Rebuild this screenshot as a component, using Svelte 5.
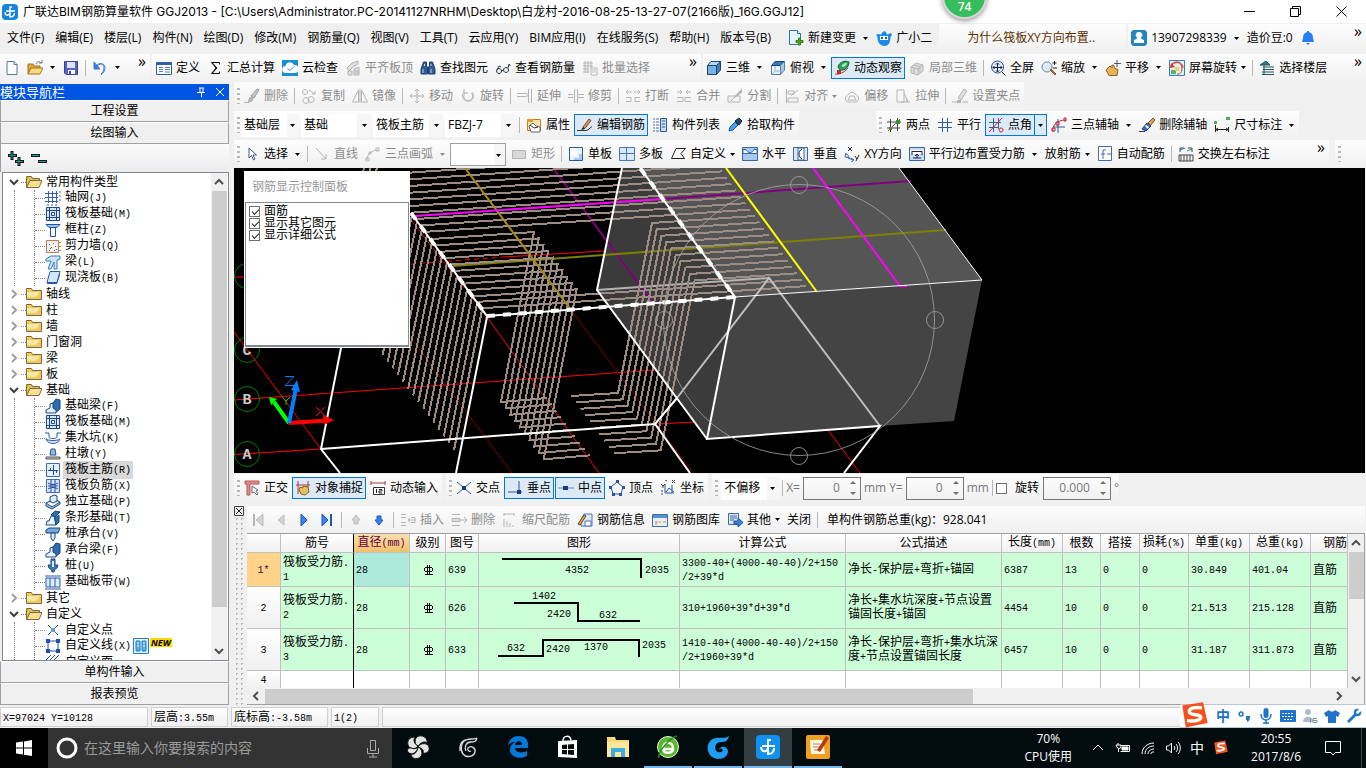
<script lang="ts">
  type Shape = [fill: string, stroke: string, d: string];
  type Tool = { icon?: string; label?: string; off?: boolean; active?: boolean; split?: boolean; menu?: boolean; sep?: boolean };
  type Node = { icon: string; label: string; selected?: boolean; fresh?: boolean };
  type Group = { label: string; open?: boolean; children?: Node[] };

  const G = "#b4b4b4";
  const B = "#2a5a9c";
  const N = "none";
  const K = "#222";

  const icons: Record<string, Shape[]> = {
    newfile: [["#fff", "#5b7599", "M3 1.5h7l3 3v10H3z"], ["#dfe8f4", "#5b7599", "M10 1.5v3h3"]],
    open: [["#e2a83c", "#9b7424", "M1 14V4h5l1 2h6v2"], ["#fbdc7c", "#9b7424", "M1 14l3-6h12l-3 6z"], [N, "#777", "M9 4c1-3 4-3 5-1M12 3h3V0"]],
    save: [["#5a63c4", "#3a3f98", "M1.500 1.500h13v13H3l-1.500-1.500z"], ["#dfe3fa", N, "M4 2h8v6H4z"], ["#fff", N, "M5 10h7v4H5z"], ["#3a3f98", N, "M6 11h2v3H6z"]],
    undo: [[N, "#3f78d8", "M4 6c3-4 9-3 9 2 0 3-2 5-4 7M5 6c3-3 7-2 7 2 0 3-2 5-3 6"], ["#3f78d8", "#3f78d8", "M2 2v7h6z"]],
    define: [["#fff", "#2e5fa8", "M.500 2.500h15v12H.500z"], ["#2e5fa8", N, "M0 2h16v3H0z"], [N, "#5d7fae", "M3 7.500h4M3 9.500h4M3 11.500h4M9 7.500h5M9 9.500h5M9 12h5"]],
    sum: [[N, "#111", "M12.500 4.500v-2H4.500L9 8l-4.500 5.500h8v-2M5.500 3L10 8l-4.500 5"]],
    cloud: [["#1b8fd6", N, "M0 0h16v16H0z"], ["#fff", N, "M4 13a3.500 3.500 0 0 1-.500-7A4.500 4.500 0 0 1 12 5a4 4 0 0 1 1 8z"], [N, "#1b8fd6", "M5.500 8.500l2.500 2 4-4"]],
    flush: [["#ddd", G, "M2 8l5-5 6-2v3L8 7l-4 4zM3 11h4v4H3zM9 9l5-2v8H9z"], [N, G, "M9 11h5M9 13h5"]],
    find: [["#315b95", "#1f3f70", "M3.500 2h3v4l1 1v7H1V9zM9.500 2h3L15 9v5H8.500V7l1-1z"], [N, "#b9d2f0", "M3 9v4M11 9v4M4.500 4v2M11 4v2"]],
    glasses: [["#e8eef8", "#333", "M4 8.500a2.500 2.500 0 1 0 .1 0zM11 7.500a2.500 2.500 0 1 0 .1 0z"], [N, "#333", "M6.500 11l2-1M2 10l2-4 2 1M13 8l1-4 1.500 2"]],
    batch: [[N, G, "M1 3h10M1 6h10M1 9h6M1 12h6M3 1v12M6 1v12M9 1v7"], ["#fff", G, "M9 8h6v7H9zM10 10h4M10 12h4"]],
    cube: [["#78b2e4", "#1c456e", "M1.500 5.500h9v9h-9z"], ["#b5d8f5", "#1c456e", "M1.500 5.500L5 1.500h9.500l-4 4z"], ["#3f7db8", "#1c456e", "M10.500 5.500l4-4V10l-4 4.500z"]],
    topview: [["#e8f2fc", "#5580b0", "M1.500 5.500h9v9h-9z"], ["#3a78b8", "#1c456e", "M1.500 5.500L5 1.500h9.500l-4 4z"], ["#a8cbec", "#5580b0", "M10.500 5.500l4-4V10l-4 4.500z"], [N, "#9ab8d8", "M5 6v5l-3 3M5 11h9"]],
    orbit: [["#28a35a", "#126a35", "M4 7c1-5 7-7 11-5 0 5-4 9-9 8z"], ["#b8ecc5", N, "M8 5c2-2 4-2 5-2-1 3-3 4-5 4z"], [N, "#c03030", "M1 14c4 1 10-2 13-6"], ["#c03030", N, "M3 10h4v4H3z"]],
    partial: [["#e0e0e0", G, "M2 7l5-4 7 2v6l-5 4-7-2z"], [N, G, "M2 7l7 2 5-4M9 9v6M5 5l6 2v6M5 8v6"]],
    full: [["#dcebfa", "#2d4f80", "M7.500 1a6 6 0 1 0 .1 0z"], [N, "#223", "M7.500 3v9M3 7.500h9M6 4.500L7.500 3 9 4.500M6 10.500L7.500 12 9 10.500M4.500 6L3 7.500 4.500 9M10.500 6L12 7.500 10.500 9"], [N, "#223", "M12 12l3.500 3.500"]],
    zoom: [["#dcebfa", "#667fa0", "M6 2a5 5 0 1 0 .1 0z"], ["#a86a38", "#8a5a30", "M9 10l5 5 1-1-5-5z"], [N, "#223", "M13.500 1v4M11.500 3h4M12 8h4"]],
    pan: [["#e8b458", "#8a6420", "M3 8l2-2 2 2V5l2 .500 1 3 3 1-1 6H4L1 10z"], [N, "#556", "M12 0v7M9 3.500h7"]],
    rotate: [["#dff0f8", "#3080c0", "M.500.500h15v15H.500z"], [N, "#e03020", "M3 5c3-4 10-3 10 3s-3 6-5 6M3 4c4-4 11-2 11 4"], ["#58b858", N, "M2 10h5v4H2z"], ["#e03020", N, "M1 8l5-1-4-4z"], ["#f0d060", N, "M6 7h4v4H6z"]],
    floor: [["#2e7d8c", "#1c5560", "M1 5l6-4 4 4z"], [N, "#1c5560", "M4 7h11M4 9.500h11M3 12h12M3 14.500h12M5 5v9"]],
    brush: [["#c8c8c8", "#999", "M7 8l6-7 2 1-5 8z"], [G, N, "M4 14c0-4 2-6 5-5 1 3-1 6-5 5z"], [N, G, "M0 14.500h5"]],
    copy: [[N, G, "M4 1.500a2.500 2.500 0 1 0 .1 0zM10 8.500a3 3 0 1 0 .1 0zM5 9.500a3 3 0 1 0 .1 0z"], [N, G, "M8 2l6 4M14 3v3h-3"]],
    mirror: [[N, G, "M6.500 2v12h-6zM9.500 2v12h6zM8 1v14"]],
    move: [[N, G, "M8 1v14M1 8h14M6 3l2-2 2 2M6 13l2 2 2-2M3 6L1 8l2 2M13 6l2 2-2 2"]],
    turn: [[N, G, "M4 4a5.500 5.500 0 1 0 8 0M4 1v4h4"], [N, G, "M5 5a4.500 4.500 0 1 0 6.500 0"]],
    extend: [[N, G, "M0 5.500h9M0 8.500h9M11.500 1v14M14.500 1v14M10 5v4"]],
    trim: [[N, G, "M0 6.500h5M0 9.500h5M10 6.500h6M10 9.500h6M6.500 1v14M9.500 1v14"]],
    break: [[N, G, "M1 9.500h5v4H1M15 9.500h-5v4h5M1 4h6M9 4h6M3 2L1 4l2 2M13 2l2 2-2 2"]],
    merge: [[N, G, "M1 9.500h6v4H1M15 9.500H9v4h6M1 4h5M10 4h5M4 2l2 2-2 2M12 2l-2 2 2 2"]],
    divide: [[N, G, "M1 8h12v6H1zM4 13L15 1"], [G, G, "M7 10l7-8 1 2z"]],
    align: [[N, G, "M2.500 1v14M4 3h6v3H4zM4 10h10v4H4zM14 2L7 8"]],
    offset: [[N, G, "M5 6a3.500 3.500 0 0 1 6 0c4 1 5 7 1 8H4c-4-1-3-7 1-8zM6 8h4l2 4H4z"]],
    stretch: [[N, G, "M2 2h7v12H2zM9 5l4 9M6 14h9M12 11v3"]],
    grippt: [[N, G, "M0 14h5M10 14h6"], ["#ddd", G, "M6 10l6-9 3 2-6 9z"], [G, N, "M5 12h4v3H5z"]],
    props: [["#f8e0a8", "#c08020", "M1.500 2.500h13v11h-13z"], ["#e8952c", N, "M1 2h6v3H1z"], ["#fff", "#666", "M3 9l4-3 3 3 4 1v5H5z"], [N, "#333", "M4 8l4 3 4-1"]],
    edit: [[N, "#333", "M0 13.500h10M10 13.500l5-4"], ["#d89858", "#73502c", "M6 10l6-8 2 1.500-6 8z"], ["#222", N, "M4 13l2-3 2 2z"]],
    list: [[N, "#5070a0", "M1 2h2M1 5h2M1 8h2M1 11h2M1 14h2M4 2h3M4 5h3M4 8h3M4 11h3M4 14h3"], ["#c8ddf4", B, "M8.500 1.500h6v13h-6z"], [N, B, "M10 4h3M10 7h3M10 10h3"]],
    pick: [["#4aa0e8", "#1d5c9c", "M2 14l1-4 5-5 3 3-5 5z"], ["#244a78", "#122", "M8 4l4-3 3 3-3 4z"]],
    two: [[N, "#445", "M4.500 2v13M11.500 1v13M1 5h14M1 11h13"], [N, "#d03030", "M2 14L14 2"], ["#3a9030", N, "M10 3h4v4h-4zM3 10h3v3H3z"]],
    parallel: [[N, "#335c98", "M5.500 1v14M10.500 1v14M1 5.500h14M1 10.500h14"]],
    angle: [[N, "#335c98", "M5.500 1v14M10.500 1v11M1 5.500h12M1 10.500h10"], [N, "#d02030", "M1 15L14 1M13 11a2 2 0 1 0 .1 0z"]],
    three: [[N, "#c02838", "M2 15C1 8 6 3 15 3"], [N, B, "M7 2v14M2 10h12"], [N, "#c02838", "M1 11h3v3H1zM5 5h3v3H5zM13 1h2v3h-2z"]],
    delaxis: [["#e0a050", "#7a5424", "M9 6l5-5 2 2-5 6z"], ["#4068c0", "#203878", "M3 12l5-6 4 3-5 5z"], ["#fff", N, "M6 9l3 3 1-2-3-2z"], [N, "#335", "M0 14.500h6"]],
    dim: [[N, K, "M1.500 8v7M14.500 10v5M2 12.500h12M4 11l-2 1.500L4 14M12 11l2 1.500L12 14"], ["#50b050", N, "M0 4h3v3H0zM12 0h4v3h-4z"]],
    select: [["#fff", "#445a80", "M5 2v10l2.500-2.500L9.500 14l1.500-1-2-4h3.500z"]],
    line: [[N, G, "M2 2l10 11M12 8v5H7"]],
    arc: [[N, G, "M2 14C2 8 7 4 13 4M11 2h3v3h-3zM1 12h3v3H1zM4 6h2v2H4z"]],
    rect: [["#d8d8d8", G, "M1.500 4.500h13v8h-13z"]],
    single: [["#e8f1fc", B, "M1.500 1.500h13v13h-13z"], ["#fff", N, "M2 2h7v8H2z"], ["#a8c8f0", N, "M11 8h3v6H6v-2h5z"]],
    multi: [["#d9e8fa", "#4478b8", "M.500 1.500h15v13H.500z"], [N, "#4478b8", "M7.500 2v12M1 7.500h14"]],
    custom: [[N, K, "M6 2.500h9.500L11 7.500l3.500 5H1.500z"]],
    horiz: [["#a8c8f0", "#3468a8", "M.500 1.500h15v13H.500z"], ["#fff", "#3468a8", "M1 3.500h3c1 4 7 4 8 0h3v4H1z"]],
    vert: [["#d8e6f8", "#3468a8", "M.500 1.500h14v13h-14z"], ["#fff", "#3468a8", "M5 2h6v12H5z"], [N, "#223", "M9 3c-4 2-4 8 0 10"]],
    xy: [[N, "#223", "M4 1l4 4M8 1L4 5M11 10l2 3M15 9l-3 6"], [N, "#3468a8", "M1 9c2-2 4 0 3 3l5 2M2 7l-1 4 5 1M7 12l3 2-3 2"]],
    edge: [["#c8dcf4", "#3468a8", "M.500 1.500h15v13H.500z"], ["#fff", N, "M1 4h14v4H1z"], [N, "#223", "M3 5.500h10M3 5v4M13 5v4M4 12h8M8 8v4M6 10l2-2 2 2"]],
    auto: [["#fff", "#4468b8", "M1.500.500h13v14h-13z"], [N, "#4468b8", "M9 4H6v9M4 8h4M10 8h5"]],
    swap: [[N, "#444", "M1 9h14v6H1zM3 9v6M6 9v6M9 9v6M12 9v6M2 6V2h4M14 6V2h-4"], [N, "#2878c0", "M2 4l5-2M9 5l5-2"]],
    ortho: [["#e08888", "#b85858", "M1 1h14v3H6v11H3V4H1z"], ["#fff", "#667", "M8 6v7l2-1 3 3 1-1-2-3 2-1z"]],
    snap: [[N, "#a04038", "M3 1v13M1 5h14M13 1v9"], ["#e8bf62", "#8a6420", "M5 7l3 1V6l5 1 1 5-4 3-4-1-2-4z"]],
    dyn: [[N, "#a04038", "M1 3h14M1 1v4M15 1v4"], ["#fff", "#333", "M3.500 7.500h11v7h-11z"], [N, "#222", "M6.500 9v4M9 9.500h3v1.500H9V13h3"]],
    cross: [[N, "#2458a0", "M1 2l14 12M15 2L1 14"], ["#1a3a80", N, "M6 6h4v4H6z"]],
    perp: [[N, "#2458a0", "M1 12h14M12 1v11"], ["#1a3a80", N, "M10 10h4v4h-4z"]],
    mid: [[N, "#5a8cc8", "M0 8h16"], ["#1a3a80", N, "M5 6h5v4H5z"]],
    apex: [[N, "#2458a0", "M8 2l6 5-2 7H4L2 7z"], ["#2458a0", N, "M7 0h3v3H7zM0 6h3v3H0zM13 6h3v3h-3zM3 13h3v3H3zM10 13h3v3h-3z"]],
    coord: [[N, "#2458a0", "M5 4v9h9M6 12l3-4 5 4M12 5v8"], [N, "#445", "M1 4l2 2 2-2M3 6v2M5 0l2 1M12 0l3 3M15 0l-3 3M1 11h2M1 14h2"]],
    insert: [[N, G, "M1 2.500h5M1 5.500h5M1 10.500h5M1 13.500h5M8 8h8M10 6L8 8l2 2M11 5.500h4v5h-4"]],
    remove: [["#ddd", G, "M1 6.500h8v3H1zM1 2.500h8M1 13.500h8"], [N, G, "M9 8h7M13 5l3 3-3 3"]],
    scale: [[N, G, "M2 2h10M2 1v3M12 1v3M2 7v8M5 9v6M8 11v4M11 13v2"]],
    info: [["#dbe8f8", "#5078b0", "M7 2h8v12H4V8z"], ["#e0b050", "#5c4420", "M1 12l6-9 2 1-6 9z"], ["#fff", "#5078b0", "M8 9h6v5H8z"]],
    library: [["#e8f0fa", "#3a6cb0", "M.500 2.500h15v12H.500z"], ["#5a90d0", N, "M1 3h14v3H1z"], [N, "#d08830", "M3 10h3M7 10h2M11 10h3M3 12h2"]],
    other: [["#dbe8f8", "#4468a0", "M1.500 1.500h10v11h-10z"], [N, "#4468a0", "M3 4h7M3 6h7M3 8h4"], ["#3c80e0", "#1c50a0", "M7 9h4V6l5 4.500L11 15v-3H7z"]],
    first: [["#d4d4d4", "#bbb", "M13 2v12L6 8z"], [G, N, "M3 2h2v12H3z"]],
    prev: [["#d4d4d4", "#bbb", "M11 3v10L5 8z"]],
    next: [["#3c80ec", "#1c58c0", "M5 2v12l6-6z"]],
    last: [["#3c80ec", "#1c58c0", "M3 2v12l6-6z"], ["#1c58c0", N, "M11 2h2v12h-2z"]],
    up: [["#d4d4d4", "#bbb", "M8 3l4 5h-2v4H6V8H4z"]],
    down: [["#3c80ec", "#1c58c0", "M8 13l4-5h-2V4H6v4H4z"]],
    grid: [[N, "#3060b8", "M3.500 1v12M7.500 1v12M11.500 1v12M0 3.500h13M0 7.500h13M0 11.500h13M14 2h2M14 6h2M14 10h2M2 15h2M6 15h2M10 15h2"]],
    raft: [["#dce8f8", "#1a4a8c", "M1.500 1.500h13v13h-13z"], [N, "#1a4a8c", "M4.500 2v12M11.500 2v12M2 4.500h12M2 11.500h12"], ["#fff", "#1a4a8c", "M6.500 6.500h3v3h-3z"]],
    column: [["#9cc0f0", "#2050a0", "M1 2.500h14l-3 3H4z"], ["#fff", "#2050a0", "M5.500 5.500h5v9h-5z"]],
    wall: [["#eee", "#c07858", "M1.500 2.500h12v12h-12z"], [N, "#666", "M4 6.500h1M8 5.500h1M6 9.500h1M10 8.500h1M4 12.500h1M9 12.500h1M5 10.500h1M11 11.500h1"], [N, "#d08020", "M13 4.500h3M13 8.500h3M13 12.500h3"]],
    beam: [["#cfe4fa", "#2880c8", "M1 5l5-3h9v3l-3 1v9H9V8l-3 7H3l3-8H1z"]],
    slab: [["#d4e4fa", "#2858a8", "M5 1.500h10l-3 11H2z"], ["#2858a8", N, "M2 12h10l3-10v3l-3 9H2z"]],
    fbeam: [["#2c6cb0", "#184880", "M5 9l6-8 4 1v9l-5 4z"], ["#e8f2fc", "#184880", "M1 15v-3l4-2V6l3-1v5l3 2v3z"]],
    pit: [[N, "#2858a8", "M0 3h4v4c0 2 8 2 8 0V3h4"], ["#dce8fa", "#2858a8", "M1 9c2 6 12 6 14 0-3 2-11 2-14 0z"]],
    pier: [["#9cb8e0", "#2050a0", "M6 3h4l1 6H5z"], ["#ccc", "#555", "M1 11h14v2H1z"]],
    main: [["#e6effc", "#3a68c8", "M1.500 1.500h13v13h-13z"], [N, "#1c48a0", "M8.500 3v10M3 8.500h10M5.500 6v3M11.500 8v3"]],
    neg: [["#dbe6fa", "#3a68c8", "M1.500 1.500h13v13h-13z"], [N, "#1c48a0", "M6 2v12M10 2v12M3 5c3 2 7 2 10 0M3 8h10M3 11c3-2 7-2 10 0"]],
    iso: [["#9cc4ec", "#1a4a80", "M1 9l8-4 6 3-8 5zM1 9v3l6 3 8-5V8"], ["#dcecfa", "#1a4a80", "M5 3l4-2 3 1v5l-4 2-3-2z"]],
    strip: [["#e8f2fc", "#184880", "M1 15l1-4h2l2-5h3l2 9z"], ["#2c6cb0", "#184880", "M6 5l4-4 5 1-5 5zM10 8l4-3v7l-3 3z"]],
    cap: [["#78a8dc", "#184880", "M1 4l3-2h11l-2 5H1z"], ["#dcecfa", "#184880", "M6 7h4v5l-2 3-2-3z"]],
    pile: [["#3a78b8", "#184880", "M6 1h4v6h3l-1 3-2 1-1 3H7l-1-3-2-1-1-3h3z"], ["#dcecfa", N, "M7 3h2v6H7z"]],
    band: [["#dcecfa", "#2858a8", "M1 4h14v9H1z"], [N, "#2858a8", "M5 4v9M10 4v9M0 2h16M0 15h16"]],
    point: [[N, "#2458a0", "M3 3l10 10M13 3L3 13"], ["#58a0e0", N, "M6 6h4v4H6z"]],
    poly: [["#fff", "#2050b0", "M3 3h10v10H3z"], ["#2050b0", N, "M1 1h4v4H1zM11 1h4v4h-4zM1 11h4v4H1zM11 11h4v4h-4z"]],
    face: [[N, "#2050b0", "M1 6l5-5M5 6l5-5M9 6l5-5M1 10l9-9"]],
    book: [["#e8f6ff", "#2080c8", "M.500.500h15v15H.500z"], ["#5ab0e8", "#2080c8", "M3 3h4v10H3zM9 3h4v10H9z"], [N, "#fff", "M4 5h2M4 8h2M10 5h2M10 8h2"]],
    folder: [["#f0c860", "#7c6a3c", "M.500 13.500v-11h5l1 2h9v9z"], ["#fbe6a4", N, "M1 6h13L10 11H1z"]],
    folderopen: [["#e8bc50", "#7c6a3c", "M.500 13.500v-11h5l1 2h7v3"], ["#fbdf90", "#7c6a3c", "M.500 13.500L4 6.500h12l-3 7z"]],
    addfile: [["#e4f2fc", "#2878b8", "M1.500.500h8l3 3v11h-11z"], ["#fff", "#2878b8", "M9.500.500v3h3"], ["#50a818", "#388010", "M10.500 8h2v2.500H15v2h-2.500V15h-2v-2.500H8v-2h2.500z"]],
    mascot: [["#1c8ce8", N, "M2 4l3 .500C7 0 10 0 11 4.500L15 3l1 2-1.500 2c0 5-2 9-6 9S1 12 1.500 7L0 5z"], ["#fff", N, "M4 6h8v4H4z"], ["#125a98", N, "M5 7h2v2H5zM9 7h2v2H9z"]],
    user: [["#2484c0", N, "M2 0h12l2 2v12l-2 2H2l-2-2V2z"], ["#fff", N, "M8 2a3 3 0 0 1 2 5.500L10.500 9l2.500 1v3H3v-3l2.500-1L6 7.500A3 3 0 0 1 8 2z"]],
    bell: [["#2880f0", N, "M7 1h2v1c3 1 4 3 4 6l1 4H2l1-4c0-3 1-5 4-6zM6 13h4l-2 2z"]],
  };

  const menus = ["文件(F)", "编辑(E)", "楼层(L)", "构件(N)", "绘图(D)", "修改(M)", "钢筋量(Q)", "视图(V)", "工具(T)", "云应用(Y)", "BIM应用(I)", "在线服务(S)", "帮助(H)", "版本号(B)"];

  const standard: Tool[] = [
    { icon: "define", label: "定义" }, { icon: "sum", label: "汇总计算" }, { icon: "cloud", label: "云检查" },
    { icon: "flush", label: "平齐板顶", off: true }, { icon: "find", label: "查找图元" },
    { icon: "glasses", label: "查看钢筋量" }, { icon: "batch", label: "批量选择", off: true },
  ];
  const view: Tool[] = [
    { icon: "cube", label: "三维", split: true }, { icon: "topview", label: "俯视", split: true },
    { icon: "orbit", label: "动态观察", active: true }, { icon: "partial", label: "局部三维", off: true }, { sep: true },
    { icon: "full", label: "全屏" }, { icon: "zoom", label: "缩放", split: true }, { icon: "pan", label: "平移", split: true },
    { icon: "rotate", label: "屏幕旋转", menu: true }, { sep: true }, { icon: "floor", label: "选择楼层" },
  ];
  const modify: Tool[] = [
    { icon: "brush", label: "删除", off: true }, { sep: true }, { icon: "copy", label: "复制", off: true },
    { icon: "mirror", label: "镜像", off: true }, { sep: true }, { icon: "move", label: "移动", off: true },
    { icon: "turn", label: "旋转", off: true }, { sep: true }, { icon: "extend", label: "延伸", off: true },
    { icon: "trim", label: "修剪", off: true }, { sep: true }, { icon: "break", label: "打断", off: true },
    { icon: "merge", label: "合并", off: true }, { icon: "divide", label: "分割", off: true }, { sep: true },
    { icon: "align", label: "对齐", off: true, menu: true }, { icon: "offset", label: "偏移", off: true },
    { icon: "stretch", label: "拉伸", off: true }, { sep: true }, { icon: "grippt", label: "设置夹点", off: true },
  ];
  const component: Tool[] = [
    { sep: true }, { icon: "props", label: "属性" }, { icon: "edit", label: "编辑钢筋", active: true },
    { icon: "list", label: "构件列表" }, { icon: "pick", label: "拾取构件" },
  ];
  const axes: Tool[] = [
    { icon: "two", label: "两点" }, { icon: "parallel", label: "平行" }, { icon: "angle", label: "点角", active: true, split: true },
    { icon: "three", label: "三点辅轴", split: true }, { icon: "delaxis", label: "删除辅轴" }, { icon: "dim", label: "尺寸标注", split: true },
  ];
  const drawA: Tool[] = [
    { icon: "select", label: "选择", split: true }, { sep: true }, { icon: "line", label: "直线", off: true },
    { icon: "arc", label: "三点画弧", off: true, split: true },
  ];
  const drawB: Tool[] = [
    { icon: "rect", label: "矩形", off: true }, { sep: true }, { icon: "single", label: "单板" }, { icon: "multi", label: "多板" },
    { icon: "custom", label: "自定义", menu: true }, { icon: "horiz", label: "水平" }, { icon: "vert", label: "垂直" },
    { icon: "xy", label: "XY方向" }, { icon: "edge", label: "平行边布置受力筋", split: true }, { label: "放射筋", menu: true },
    { icon: "auto", label: "自动配筋" }, { sep: true }, { icon: "swap", label: "交换左右标注" },
  ];
  const snapA: Tool[] = [
    { icon: "ortho", label: "正交" }, { icon: "snap", label: "对象捕捉", active: true }, { icon: "dyn", label: "动态输入" },
  ];
  const snapB: Tool[] = [
    { icon: "cross", label: "交点" }, { icon: "perp", label: "垂点", active: true }, { icon: "mid", label: "中点", active: true },
    { icon: "apex", label: "顶点" }, { icon: "coord", label: "坐标" },
  ];
  const barTools: Tool[] = [
    { icon: "insert", label: "插入", off: true }, { icon: "remove", label: "删除", off: true }, { icon: "scale", label: "缩尺配筋", off: true },
    { icon: "info", label: "钢筋信息" }, { icon: "library", label: "钢筋图库" }, { icon: "other", label: "其他", menu: true },
    { label: "关闭" }, { sep: true },
  ];

  const tree: Group[] = [
    { label: "常用构件类型", open: true, children: [
      { icon: "grid", label: "轴网(J)" }, { icon: "raft", label: "筏板基础(M)" }, { icon: "column", label: "框柱(Z)" },
      { icon: "wall", label: "剪力墙(Q)" }, { icon: "beam", label: "梁(L)" }, { icon: "slab", label: "现浇板(B)" },
    ] },
    { label: "轴线" }, { label: "柱" }, { label: "墙" }, { label: "门窗洞" }, { label: "梁" }, { label: "板" },
    { label: "基础", open: true, children: [
      { icon: "fbeam", label: "基础梁(F)" }, { icon: "raft", label: "筏板基础(M)" }, { icon: "pit", label: "集水坑(K)" },
      { icon: "pier", label: "柱墩(Y)" }, { icon: "main", label: "筏板主筋(R)", selected: true }, { icon: "neg", label: "筏板负筋(X)" },
      { icon: "iso", label: "独立基础(P)" }, { icon: "strip", label: "条形基础(T)" }, { icon: "cap", label: "桩承台(V)" },
      { icon: "fbeam", label: "承台梁(F)" }, { icon: "pile", label: "桩(U)" }, { icon: "band", label: "基础板带(W)" },
    ] },
    { label: "其它" },
    { label: "自定义", open: true, children: [
      { icon: "point", label: "自定义点" }, { icon: "poly", label: "自定义线(X)", fresh: true }, { icon: "face", label: "自定义面" },
    ] },
  ];

  const columns = ["", "筋号", "直径(mm)", "级别", "图号", "图形", "计算公式", "公式描述", "长度(mm)", "根数", "搭接", "损耗(%)", "单重(kg)", "总重(kg)", "钢筋"];
  const rows = [
    { no: "1*", name: "筏板受力筋.1", fig: "639", h: 33, line: "23,6 162,6 162,25", texts: [[86, 20, "4352"], [166, 20, "2035"]], formula: "3300-40+(4000-40-40)/2+150/2+39*d", desc: "净长-保护层+弯折+锚固", rest: ["6387", "13", "0", "0", "30.849", "401.04"] },
    { no: "2", name: "筏板受力筋.2", fig: "626", h: 41, line: "35,16 99,16 99,34 161,34", texts: [[53, 12, "1402"], [68, 30, "2420"], [120, 31, "632"]], formula: "310+1960+39*d+39*d", desc: "净长+集水坑深度+节点设置锚固长度+锚固", rest: ["4454", "10", "0", "0", "21.513", "215.128"] },
    { no: "3", name: "筏板受力筋.3", fig: "633", h: 41, line: "19,27 64,27 64,11 160,11 160,28", texts: [[28, 22, "632"], [67, 23, "2420"], [105, 21, "1370"], [163, 19, "2035"]], formula: "1410-40+(4000-40-40)/2+150/2+1960+39*d", desc: "净长-保护层+弯折+集水坑深度+节点设置锚固长度", rest: ["6457", "10", "0", "0", "31.187", "311.873"] },
  ];

  // Reinforcement is generated bar by bar along the slab edges.
  const slope = -0.0685;
  const leftEdge = (x: number, y: number) => (y + slope * (411 - x) - 213) / (1.355 - slope) + 411;
  const yellowEdge = (x: number, y: number) => (y + slope * (726 - x) - 168) / (1.363 - slope) + 720;
  const at = (x: number, x0: number, y0: number) => y0 + slope * (x - x0);

  const fullBars: string[] = [];
  for (const k of [-10, -9, -8, -7, -6, -5, -4, -3, -2, -1, 10, 11]) {
    const x = 652 + 4.74 * k;
    const y = 223 + 6.37 * k;
    const l = leftEdge(x, y);
    const r = yellowEdge(x, y);
    fullBars.push(`M${l} ${at(l, x, y)}L${r} ${at(r, x, y)}`);
  }
  const hookBars: string[] = [];
  for (let i = 0; i < 10; i++) {
    const dx = 4.74 * i;
    const dy = 6.37 * i;
    const l = leftEdge(534 + dx, 232 + dy);
    const r = yellowEdge(652 + dx, 223 + dy);
    hookBars.push(`M${l} ${at(l, 534 + dx, 232 + dy)}L${534 + dx} ${232 + dy}L${501 + dx} ${402 + dy}l46 -4`);
    hookBars.push(`M${r} ${at(r, 652 + dx, 223 + dy)}L${652 + dx} ${223 + dy}L${618 + dx} ${393 + dy}l-47 3`);
  }
  const sideBars = Array.from({ length: 24 }, (_, j) => `M${482 - 5 * j} ${310 - 6.8 * j}L${454 - 5.1 * j} ${450 - 6.8 * j}`);

  const pieces = (text: string) => text.split(/([\x20-\x7e]+)/).filter(Boolean).map((t) => ({ t, latin: /^[\x20-\x7e]/.test(t) }));

  let floor = $state("基础层");
  let faces = $state([true, true, true]);
  const faceLabels = ["面筋", "显示其它图元", "显示详细公式"];
</script>

{#snippet icon(name: string)}
  <svg class="icon" viewBox="0 0 16 16" aria-hidden="true">
    {#each icons[name] as [fill, stroke, d]}
      <path {d} {fill} {stroke} />
    {/each}
  </svg>
{/snippet}

{#snippet arrow()}
  <svg class="arrow" viewBox="0 0 5 3" aria-hidden="true"><path d="M0 0h5L2.500 3z" fill="currentColor" /></svg>
{/snippet}

{#snippet mixed(text: string)}
  {#each pieces(text) as p}{#if p.latin}<span class="latin">{p.t}</span>{:else}{p.t}{/if}{/each}
{/snippet}

{#snippet tools(items: Tool[])}
  {#each items as item}
    {#if item.sep}
      <span class="sep"></span>
    {:else}
      <span class="split" class:active={item.active} class:off={item.off}>
        <button class="tool" aria-label={item.label ?? item.icon}>
          {#if item.icon}{@render icon(item.icon)}{/if}
          {#if item.label}<span>{item.label}</span>{/if}
          {#if item.menu}{@render arrow()}{/if}
        </button>
        {#if item.split}<button class="drop" aria-label="{item.label ?? item.icon} 选项">{@render arrow()}</button>{/if}
      </span>
    {/if}
  {/each}
{/snippet}

{#snippet chevron(d: string)}
  <svg class="chevron" viewBox="0 0 10 10" aria-hidden="true"><path {d} fill="none" stroke="#505050" stroke-width="2" /></svg>
{/snippet}

{#snippet sogou()}
  <path d="M2 3l18-3 4 18-19 4z" fill="#f4511c" />
  <path d="M19 5c-5-1-11 0-11 3 0 4 10 2 10 5 0 3-7 4-12 3" fill="none" stroke="#fff" stroke-width="3" />
{/snippet}

{#snippet spin(id: string, value: string)}
  <span class="spin">
    <input {id} {value} />
    <svg viewBox="0 0 6 14" aria-hidden="true"><path d="M0 3l3-3 3 3zM0 11l3 3 3-3z" fill="#707070" /></svg>
  </span>
{/snippet}

<div class="app">
  <header class="title">
    <svg class="logo" viewBox="0 0 16 16" aria-hidden="true">
      <rect width="16" height="16" rx="4" fill="#1484e0" />
      <path d="M8 2.500v11M3 8c0 4 4 4 5 1M4 7h9M8 3h2M8 13c3 0 5-2 4-4" fill="none" stroke="#fff" stroke-width="1.500" />
    </svg>
    <h1>广联达BIM钢筋算量软件 GGJ2013 - [C:\Users\Administrator.PC-20141127NRHM\Desktop\白龙村-2016-08-25-13-27-07(2166版)_16G.GGJ12]</h1>
    <div class="window-buttons">
      <button aria-label="最小化"><svg viewBox="0 0 11 11"><path d="M0 5.500h11" /></svg></button>
      <button aria-label="还原"><svg viewBox="0 0 11 11"><path d="M.500 2.500h8v8h-8zM2.500 2.500v-2h8v8h-2" /></svg></button>
      <button aria-label="关闭"><svg viewBox="0 0 11 11"><path d="M.500.500l10 10M10.500.500l-10 10" /></svg></button>
    </div>
    <div class="ball">74</div>
  </header>

  <nav class="menubar">
    <div class="menus">
      {#each menus as m}<button>{m}</button>{/each}
    </div>
    {@render tools([{ icon: "addfile", label: "新建变更", split: true }, { icon: "mascot", label: "广小二" }])}
    <a class="tip strip" href="#tip">为什么筏板XY方向布置..</a>
    <div class="strip grow">
      {@render tools([{ icon: "user", label: "13907298339", split: true }, { label: "造价豆:0" }, { icon: "bell" }])}
      <span class="more">»</span>
    </div>
  </nav>

  <div class="row top">
    <div class="strip quick">
      {@render tools([{ icon: "newfile" }, { icon: "open", split: true }, { icon: "save" }, { sep: true }, { icon: "undo", split: true }])}
      <span class="more">»</span>
    </div>
    <div class="strip standard">{@render tools(standard)}<span class="more">»</span></div>
    <div class="strip grow">{@render tools(view)}<span class="more">»</span></div>
  </div>

  <div class="work">
    <aside>
      <div class="nav-title"><span>模块导航栏</span>
        <svg viewBox="0 0 28 10" aria-hidden="true"><path d="M3 1h5M4 1v4M7 1v4M1 5.500h8M5.500 6v4M20 1l8 8M28 1l-8 8" fill="none" stroke="#fff" /></svg>
      </div>
      <button class="section">工程设置</button>
      <button class="section">绘图输入</button>
      <div class="nav-tools">
        <svg viewBox="0 0 40 16" aria-hidden="true">
          <path d="M4 0v9M0 4.500h9M11 6v9M7 10.500h9M23 4.500h9M30 10.500h9" fill="none" stroke="#111" stroke-width="3" />
          <path d="M4 1v7M1 4.500h7M11 7v7M8 10.500h7M24 4.500h7M31 10.500h7" fill="none" stroke="#18a098" />
        </svg>
      </div>
      <div class="tree">
        <ul class="groups">
          {#each tree as g}
            <li>
              <button class="node">
                <svg class="expander" viewBox="0 0 10 10"><path d={g.open ? "M1 3l4 4 4-4" : "M3 1l4 4-4 4"} fill="none" stroke={g.open ? "#404040" : "#a0a0a0"} stroke-width="2" /></svg>
                <span class="stub"></span>
                {@render icon(g.open ? "folderopen" : "folder")}
                <span class="label">{g.label}</span>
              </button>
              {#if g.children}
                <ul class="children">
                  {#each g.children as c}
                    <li><button class="node" class:selected={c.selected}>
                      <span class="stub"></span>
                      {@render icon(c.icon)}
                      <span class="label">{@render mixed(c.label)}</span>
                      {#if c.fresh}{@render icon("book")}<em>NEW</em>{/if}
                    </button></li>
                  {/each}
                </ul>
              {/if}
            </li>
          {/each}
        </ul>
        <div class="vscroll">
          {@render chevron("M1 7l4-4 4 4")}
          <div class="thumb"></div>
          {@render chevron("M1 3l4 4 4-4")}
        </div>
      </div>
      <button class="section">单构件输入</button>
      <button class="section">报表预览</button>
    </aside>

    <main>
      <div class="toolbars">
        <div class="row"><div class="strip">
          <i class="grip"></i>{@render tools(modify)}
        </div></div>
        <div class="row">
          <div class="strip">
            <i class="grip"></i>
            <span class="combo small"><select aria-label="楼层" bind:value={floor}><option>基础层</option><option>首层</option></select>{@render arrow()}</span>
            <span class="combo"><select aria-label="构件类别"><option>基础</option></select>{@render arrow()}</span>
            <span class="combo"><select aria-label="构件类型"><option>筏板主筋</option></select>{@render arrow()}</span>
            <span class="combo"><select aria-label="构件"><option>FBZJ-7</option></select>{@render arrow()}</span>
            {@render tools(component)}
          </div>
          <div class="strip apart"><i class="grip"></i>{@render tools(axes)}</div>
        </div>
        <div class="row">
          <div class="strip grow">
            <i class="grip"></i>{@render tools(drawA)}
            <span class="combo boxed"><select aria-label="画法"><option></option></select>{@render arrow()}</span>
            {@render tools(drawB)}<span class="more">»</span>
          </div>
          <div class="strip tail"><i class="grip"></i></div>
        </div>
      </div>

      <div class="canvas">
        <svg class="scene" viewBox="234 168 1131 305" preserveAspectRatio="xMinYMin slice" role="img" aria-label="三维视图">
          <path d="M622 168H640L735 297 707 439 597 290z" fill="#3b3b3b" />
          <path d="M640 168H899L982 280 735 297z" fill="#555" />
          <path d="M735 297L982 280 954 421 880 426 707 439z" fill="#444" />
          <g stroke="#f00">
            <path d="M234 454.500L321 449M234 400L655 370M234 332L321 449M234 277h14M487 317L599 473M655 424L697 422M828 430L860 473M504 257L604 251M286 168h1" />
            <path d="M411 220L487 317M411 264L504 257" stroke-dasharray="5 4" />
            <path d="M411 338L512 473M571 310L693 473" stroke="#800000" />
          </g>
          <path d="M553 168L652 302l8 1M663 199L911 181" stroke="#800080" stroke-width="2" />
          <path d="M453 266L946 230" stroke="#808000" stroke-width="2" />
          <path d="M597 290L769 278" stroke="#b4b4b4" stroke-width="2" />
          <g stroke="#9c8c84" stroke-width="2" shape-rendering="crispEdges">
            {#each [...fullBars, ...hookBars, ...sideBars] as d}<path {d} />{/each}
          </g>
          <path d="M465 168L571 310" stroke="#a88a14" stroke-width="2" />
          <path d="M415 216L663 199M813 168L900 286h7" stroke="#f0f" stroke-width="2" />
          <path d="M726 168L817 292" stroke="#ff0" stroke-width="2" />
          <path d="M677 398L769 278 880 426" stroke="#c0c0c0" stroke-width="2" />
          <g stroke="#fff">
            <path d="M341 348L321 449 340 473M321 449L655 424 690 473M655 424L677 398M487 317L456 473M735 297L707 439 880 426 844 473M707 439L597 290 622 168" stroke-width="2" />
            <path d="M735 297L982 280 899 168" />
            <path d="M411 213L487 316 735 297 640 168" stroke-width="2" />
            <path d="M411 213L487 316 735 297 640 168" stroke-width="4" stroke-dasharray="8 8" />
          </g>
          <g stroke="#a8a8a8" opacity="0.8">
            <circle cx="799" cy="320" r="135.500" />
            <circle cx="799" cy="185" r="8.500" /><circle cx="799" cy="456" r="8.500" />
            <circle cx="664" cy="320" r="8.500" /><circle cx="935" cy="320" r="8.500" />
          </g>
          {#each [["A", 454], ["B", 399], ["C", 350], ["", 276]] as [name, y]}
            <circle cx="247" cy={y} r="12.500" stroke="#008000" />
            <text class="axis" x="247" y={Number(y) + 5} text-anchor="middle">{name}</text>
          {/each}
          <path d="M289 423L327 420.500" stroke="#f00" stroke-width="4" /><path d="M323 415l11 5-10 5z" fill="#f00" />
          <path d="M289 423L274 402" stroke="#0f0" stroke-width="4" /><path d="M269 397l8 2-6 6z" fill="#0f0" />
          <path d="M289 423L296 388" stroke="#0080ff" stroke-width="4" /><path d="M297 380l3 12-9-2z" fill="#0080ff" />
          <path d="M285 376.500h9l-9 9h9" stroke="#0080ff" /><path d="M282 397l4 4 4-4M286 401v4" stroke="#0c0" /><path d="M316 407l9 9M325 407l-9 9" stroke="#f00" />
        </svg>
        <section class="panel">
          <h2>钢筋显示控制面板</h2>
          <div class="checks">
            {#each faceLabels as label, i}
              <label><input type="checkbox" bind:checked={faces[i]} />{label}</label>
            {/each}
          </div>
        </section>
      </div>

      <div class="row snap">
        <div class="strip"><i class="grip"></i>{@render tools(snapA)}</div>
        <div class="strip"><i class="grip"></i>{@render tools(snapB)}</div>
        <div class="strip offset">
          <i class="grip"></i>
          <span class="combo small"><select aria-label="偏移方式"><option>不偏移</option></select>{@render arrow()}</span>
          <span class="sep"></span>
          <label for="dx">X=</label>{@render spin("dx", "0")}<span>mm</span>
          <label for="dy">Y=</label>{@render spin("dy", "0")}<span>mm</span>
          <span class="sep"></span>
          <label class="turn"><input type="checkbox" />旋转</label>
          {@render spin("angle", "0.000")}<span>°</span>
        </div>
      </div>

      <div class="dock">
        <div class="handle"><svg viewBox="0 0 10 10" aria-hidden="true"><path d="M.500.500h9v9h-9z" fill="#eee" stroke="#444" /><path d="M2 2l6 6M8 2L2 8" stroke="#222" /></svg></div>
        <div class="dock-body">
          <div class="strip bars">
            {@render tools([{ icon: "first" }, { icon: "prev" }, { icon: "next" }, { icon: "last" }, { sep: true }, { icon: "up" }, { icon: "down" }, { sep: true }])}
            {@render tools(barTools)}
            <span class="total">单构件钢筋总重(kg)：928.041</span>
          </div>
          <div class="grid">
            <div class="grid-view">
              <table>
                <colgroup>{#each columns as _, i}<col class="c{i}" />{/each}</colgroup>
                <thead><tr>{#each columns as c, i}<th class:hot={i === 2}>{@render mixed(c)}</th>{/each}</tr></thead>
                <tbody>
                  {#each rows as r, i}
                    <tr class:current={i === 0}>
                      <th>{@render mixed(r.no)}</th>
                      <td>{@render mixed(r.name)}</td>
                      <td class="dia"><span class="latin">28</span></td>
                      <td class="grade"><svg viewBox="0 0 10 10"><path d="M3.500 0v9M5.500 0v9M1 9.500h8M1 2.500h7M1 6.500h7M.500 3v3M8.500 3v3" fill="none" stroke="#000" /></svg></td>
                      <td><span class="latin">{r.fig}</span></td>
                      <td class="figure">
                        <svg width="200" height={r.h}>
                          <polyline points={r.line} fill="none" stroke="#000" stroke-width="2" />
                          {#each r.texts as [x, y, t]}<text {x} {y}>{t}</text>{/each}
                        </svg>
                      </td>
                      <td class="formula"><span class="latin">{r.formula}</span></td>
                      <td>{@render mixed(r.desc)}</td>
                      {#each r.rest as v}<td><span class="latin">{v}</span></td>{/each}
                      <td>直筋</td>
                    </tr>
                  {/each}
                  <tr class="empty"><th><span class="latin">4</span></th>{#each columns.slice(1) as _}<td></td>{/each}</tr>
                </tbody>
              </table>
              <div class="vscroll">
                {@render chevron("M1 7l4-4 4 4")}
                <div class="thumb"></div>
                {@render chevron("M1 3l4 4 4-4")}
              </div>
            </div>
            <div class="hscroll">
              {@render chevron("M7 1L3 5l4 4")}
              <div class="thumb"></div>
              {@render chevron("M3 1l4 4-4 4")}
            </div>
          </div>
        </div>
      </div>
    </main>
  </div>

  <footer class="status">
    <span class="s1">{@render mixed("X=97024 Y=10128")}</span>
    <span class="s2">{@render mixed("层高:3.55m")}</span>
    <span class="s3">{@render mixed("底标高:-3.58m")}</span>
    <span class="s4">{@render mixed("1(2)")}</span>
    <span class="s5"></span>
    <div class="ime">
      <svg class="s-logo" viewBox="0 0 26 24" aria-hidden="true">{@render sogou()}</svg>
      <b>中</b>
      <svg viewBox="0 0 16 16"><path d="M5 4a2 2 0 1 0 .1 0z" fill="none" stroke="#1e74c8" stroke-width="1.500" /><path d="M10 8h4c0 4-1 5-3 6v-2h-1z" fill="#1e74c8" /></svg>
      <svg viewBox="0 0 16 16"><rect x="5.500" y="0" width="5" height="10" rx="2.500" fill="#1e74c8" /><path d="M3 6c0 8 10 8 10 0M8 12v4M5 15h6" fill="none" stroke="#1e74c8" stroke-width="1.500" /></svg>
      <svg viewBox="0 0 16 16"><rect y="2" width="16" height="12" rx="1" fill="#1e74c8" /><path d="M2 5.500h12M2 8.500h12M4 11.500h8" stroke="#fff" stroke-dasharray="2 1" /></svg>
      <svg viewBox="0 0 16 16"><circle cx="6" cy="4" r="3" fill="#b0bccc" /><path d="M1 14c0-7 10-7 10 0z" fill="#b0bccc" /><path d="M8.500 10v5M15 10.500h-4v4h4v-2h-4" fill="none" stroke="#8090a8" /></svg>
      <svg viewBox="0 0 16 16"><path d="M5 2c1 2 5 2 6 0l5 3-2 4-2-1v7H4V8L2 9 0 5z" fill="#1e74c8" /></svg>
      <svg viewBox="0 0 16 16"><path d="M1 13l7-7c-1-4 2-6 5-5l-3 3 .500 1.500L12 6l3-3c1 3-1 6-5 5l-7 7z" fill="#1e74c8" /></svg>
    </div>
  </footer>

  <footer class="taskbar">
    <button class="start" aria-label="开始"><svg viewBox="0 0 16 16"><path d="M0 2.500L7 1.500V7.500H0zM8 1.400L16 0V7.500H8zM0 8.500H7V14.500L0 13.500zM8 8.500H16V16L8 14.700z" fill="#fff" /></svg></button>
    <label class="search">
      <svg viewBox="0 0 22 22"><circle cx="11" cy="11" r="9" fill="none" stroke="#fff" stroke-width="3" /></svg>
      <input placeholder="在这里输入你要搜索的内容" />
      <svg viewBox="0 0 22 22"><path d="M8.500 3.500h5v10h-5zM5.500 11v5.500h11V11M11 17v3M7 20h8" fill="none" stroke="#aaa" /></svg>
    </label>
    <div class="apps">
      <button aria-label="风车"><svg viewBox="0 0 24 24"><g fill="#e4e4e4" stroke="#111"><path d="M12 11C8 10 8 2 13 1s9 3 8 7c-2-2-6-1-9 3z" /><path d="M12 11C10 15 3 14 2 10s1-8 7-8c-2 3-1 7 3 9z" /><path d="M12 12c3-5 10-4 11 0s-2 7-6 6c1-3-1-5-5-6z" /><path d="M12 12c4 1 6 9 1 11s-8-1-8-4c4 1 6-2 7-7z" /><path d="M12 12c-1 6-6 8-9 6s-1-6 2-5 5 1 7-1z" /></g></svg></button>
      <button aria-label="广联达"><svg viewBox="0 0 24 24"><path d="M21 3c-3 2-7 0-11 2-5 2-6 10-3 14s11 3 12-2c1-4-4-7-7-4-1 2 1 4 3 3M21 3c-1 4-3 4-6 4-5 0-7 5-5 9M10 5C5 6 3 11 4 16" fill="none" stroke="#ddd" stroke-width="1.300" /></svg></button>
      <button aria-label="Edge"><svg viewBox="0 0 24 24"><path d="M2 11C3 4 7 1 13 1c7 0 10 5 9 12H9c0 4 6 6 12 3v5C13 25 4 22 4 15c0-4 2-6 5-8-4 0-6 2-7 4zm7-1h7c0-5-6-5-7 0z" fill="#0078d7" fill-rule="evenodd" /></svg></button>
      <button aria-label="应用商店"><svg viewBox="0 0 24 24"><path d="M2 6l19-1v18L2 22z" fill="#fff" /><path d="M7 6c0-6 7-6 8-1" fill="none" stroke="#fff" stroke-width="1.500" /><path d="M6 10l5-.500V14H6zM12 9.500l6-.500v5h-6zM6 15h5v4.500L6 19zM12 15h6v5l-6-.500z" fill="#020b0e" /></svg></button>
      <button aria-label="文件资源管理器"><svg viewBox="0 0 24 24"><path d="M1 2h8l1 3h13v17H1z" fill="#f8d775" /><path d="M1 7h22v15H1z" fill="#fde79a" /><path d="M5 22v-9h14v9h-4v-5H9v5z" fill="#3aaee0" /></svg></button>
      <button class="run" aria-label="浏览器"><svg viewBox="0 0 24 24"><circle cx="12" cy="12" r="10.500" fill="#58b82c" stroke="#e8f8e0" /><path d="M17 15c-2 4-10 4-10-2 0-7 11-7 10 1H8" fill="none" stroke="#fff" stroke-width="2.500" /><path d="M3 23C1 17 15 2 21 1" fill="none" stroke="#2c8c18" stroke-width="1.500" /></svg></button>
      <button class="run" aria-label="广联达服务"><svg viewBox="0 0 24 24"><path d="M23 1c-1 5-4 6-8 6-6 0-8 8-3 10 3 1 6-1 4-3-1-1-2 0-3 1 0-4 8-5 9 1 0 5-4 8-10 8C-1 23-2 5 10 3c5-1 9 1 13-2z" fill="#209cf0" /></svg></button>
      <button class="run here" aria-label="钢筋算量"><svg viewBox="0 0 24 24"><rect width="24" height="24" rx="4" fill="#1090f0" /><path d="M12 4v16M5 12c0 5 6 6 7 1M6 11h13M12 5h3M12 19c5 0 6-3 6-6" fill="none" stroke="#fff" stroke-width="2" /></svg></button>
      <button class="run" aria-label="记事"><svg viewBox="0 0 24 24"><rect width="24" height="24" rx="2" fill="#f0a020" /><path d="M4 5h13l2 14H5z" fill="#fff8e8" /><path d="M7 9h7M7 12h8M8 15h7" stroke="#b08050" /><path d="M11 15L20 1l3 2-9 14z" fill="#b83818" /></svg></button>
    </div>
    <div class="cpu"><span>70%</span><span>CPU使用</span></div>
    <div class="tray">
      <svg viewBox="0 0 16 16"><path d="M3 10l5-5 5 5" /></svg>
      <svg viewBox="0 0 16 16"><path d="M5.500 5.500h9v6h-9M3 3v2M1 5h5v2c0 2-4 2-4 0zM3.500 9v3" /><path d="M7 7h6v3H7z" fill="#fff" /></svg>
      <svg viewBox="0 0 16 16"><path d="M2 14C2 8 7 3 14 3M5 14c0-5 4-8 9-8M8 14c0-3 3-5 6-5M11 14c0-2 1-2 3-2" /></svg>
      <svg viewBox="0 0 16 16"><path d="M1.500 6v4h2l3 3V3l-3 3zM9 6c1 1 1 3 0 4M11 4c2 2 2 6 0 8M13 2c3 3 3 9 0 12" /></svg>
      <b>中</b>
      <svg viewBox="0 0 26 24">{@render sogou()}</svg>
    </div>
    <div class="clock"><span>20:55</span><span>2017/8/6</span></div>
    <button class="notice" aria-label="通知"><svg viewBox="0 0 16 16"><path d="M.500 1.500h15v11h-5L8 15l-2-2.500H.500z" fill="none" stroke="#fff" /></svg></button>
  </footer>
</div>

<style>
  :global(body) {
    margin: 0;
    background: #f0f0f0;
  }

  .app {
    display: flex;
    flex-direction: column;
    position: relative;
    height: 100vh;
    min-height: 640px;
    overflow: hidden;
    background: #f0f0f0;
    color: #000;
    font: 12px/16px "Open Sans", "Noto Sans CJK SC", sans-serif;
    white-space: nowrap;
  }

  .app * {
    box-sizing: border-box;
  }

  button,
  select,
  input {
    margin: 0;
    padding: 0;
    border: 0;
    background: none;
    color: inherit;
    font: inherit;
  }

  svg {
    display: block;
    flex: none;
  }

  .latin {
    font-family: "Liberation Mono", monospace;
    font-size: 10px;
  }

  .title {
    display: flex;
    align-items: center;
    position: relative;
    height: 23px;
    padding-left: 2px;
    background: #fff;
  }

  .logo {
    width: 16px;
    height: 16px;
  }

  h1 {
    flex: 1;
    margin: 0 0 0 5px;
    font-family: Inter, "Noto Sans CJK SC", sans-serif;
    font-size: 12px;
    font-weight: 400;
  }

  .window-buttons {
    display: flex;
    padding-right: 2px;
  }

  .window-buttons button {
    display: grid;
    place-items: center;
    width: 46px;
    height: 22px;
  }

  .window-buttons svg {
    width: 11px;
    height: 11px;
    fill: none;
    stroke: #000;
  }

  .ball {
    position: absolute;
    top: -26px;
    left: 942px;
    z-index: 2;
    width: 45px;
    height: 45px;
    padding-top: 23px;
    border: 2px solid #d8d8d8;
    border-radius: 50%;
    background: #36bd5c;
    box-shadow: 0 2px 5px #999;
    color: #fff;
    font-weight: 600;
    text-align: center;
  }

  .menubar,
  .row {
    display: flex;
    align-items: center;
    height: 28px;
    flex: none;
  }

  .menubar {
    height: 30px;
  }

  .menus {
    display: flex;
    gap: 11px;
    padding: 0 14px 0 7px;
  }

  .strip {
    display: flex;
    align-items: center;
    height: 28px;
    background: linear-gradient(#fdfdfd, #f0f0f0);
  }

  .grow {
    flex: 1;
    min-width: 0;
  }

  .tip {
    width: 187px;
    margin: 0 2px 0 3px;
    padding-left: 28px;
    color: #5c3000;
    text-decoration: none;
  }

  .row.top {
    height: 29px;
    gap: 2px;
  }

  .quick {
    flex: 0 0 150px;
    padding-left: 1px;
  }

  .standard {
    flex: 0 0 549px;
    padding-left: 1px;
  }

  .more {
    align-self: flex-start;
    margin: 0 4px 0 auto;
    font-size: 16px;
    line-height: 14px;
  }

  .split {
    display: flex;
    margin-right: 1px;
  }

  .tool {
    display: flex;
    align-items: center;
    gap: 4px;
    height: 24px;
    padding: 0 3px;
  }

  .drop {
    display: grid;
    place-items: center;
    width: 13px;
  }

  .active .tool {
    height: 22px;
    padding: 0 2px;
  }

  .active .tool,
  .active .drop {
    border: 1px solid #0078d7;
    background: #dce9f6;
  }

  .active .drop {
    margin-left: -1px;
  }

  .off {
    color: #8c8c8c;
  }

  .icon {
    width: 16px;
    height: 16px;
  }

  .arrow {
    width: 5px;
    height: 3px;
  }

  .sep {
    width: 1px;
    height: 16px;
    margin: 0 3px 0 2px;
    background: #b8b8b8;
  }

  .grip {
    width: 3px;
    height: 16px;
    margin: 0 1px 0 3px;
    background: repeating-linear-gradient(#b8b8b8 0 2px, transparent 2px 5px);
  }

  .combo {
    position: relative;
    display: flex;
    width: 70px;
    height: 23px;
    margin-right: 2px;
    background: linear-gradient(90deg, #fff 80%, #f6f6f6 80%);
  }

  .combo.small {
    width: 58px;
  }

  .combo.boxed {
    width: 56px;
    border: 1px solid #a0a0a0;
  }

  .combo select {
    width: 100%;
    padding: 0 14px 0 3px;
    appearance: none;
  }

  .combo .arrow {
    position: absolute;
    top: 10px;
    right: 4px;
    pointer-events: none;
  }

  .work {
    display: flex;
    flex: 1;
    min-height: 0;
  }

  aside {
    display: flex;
    flex-direction: column;
    flex: 0 0 230px;
    padding: 2px 1px 1px 0;
  }

  .nav-title {
    display: flex;
    align-items: center;
    justify-content: space-between;
    height: 16px;
    padding-right: 5px;
    background: #0055e5;
    color: #fff;
    font-size: 13px;
  }

  .nav-title svg {
    width: 28px;
    height: 10px;
  }

  .section {
    height: 22px;
    border: 1px solid #a0a0a0;
    border-top-color: #fff;
  }

  .nav-tools {
    height: 28px;
    padding: 7px;
    border-left: 1px solid #a0a0a0;
    background: linear-gradient(#fbfbfb, #ececec);
  }

  .nav-tools svg {
    width: 40px;
    height: 16px;
  }

  .tree {
    display: flex;
    flex: 1;
    min-height: 0;
    margin-left: 2px;
    border: 1px solid #828790;
    background: #fff;
  }

  .groups {
    flex: 1;
    overflow: hidden;
    padding: 1px 0 0 6px;
  }

  ul {
    margin: 0;
    padding: 0;
    list-style: none;
  }

  .children {
    margin-left: 5px;
    padding-left: 19px;
    border-left: 1px dotted #808080;
  }

  .children > li {
    border-left: 1px dotted #808080;
  }

  .node {
    display: flex;
    align-items: center;
    height: 16px;
  }

  .expander {
    width: 10px;
    height: 10px;
  }

  .stub {
    width: 5px;
    margin-left: 2px;
    border-top: 1px dotted #808080;
  }

  .children .stub {
    width: 10px;
    margin-left: 0;
  }

  .label {
    padding: 0 2px;
    margin-left: 2px;
  }

  .selected .label {
    background: #d9d9d9;
  }

  .node em {
    align-self: flex-start;
    margin-left: 1px;
    padding: 0 1px;
    background: #ffd800;
    font-size: 9px;
    font-weight: 700;
    line-height: 9px;
  }

  .vscroll,
  .hscroll {
    display: flex;
    align-items: center;
    background: #f0f0f0;
  }

  .vscroll {
    flex: 0 0 16px;
    flex-direction: column;
    justify-content: space-between;
    padding: 4px 0;
    gap: 4px;
  }

  .vscroll .thumb {
    width: 15px;
    height: 47px;
    margin-bottom: auto;
    background: #cdcdcd;
  }

  .tree .vscroll {
    margin-right: 1px;
  }

  .tree .thumb {
    height: 416px;
    flex: 0 1 416px;
  }

  .hscroll {
    height: 16px;
    padding: 0 20px 0 4px;
    gap: 4px;
  }

  .hscroll .thumb {
    flex: 0 1 708px;
    height: 15px;
    margin-right: auto;
    background: #cdcdcd;
  }

  .chevron {
    width: 10px;
    height: 10px;
  }

  main {
    display: flex;
    flex-direction: column;
    flex: 1;
    min-width: 0;
    padding-left: 4px;
  }

  .toolbars {
    display: flex;
    flex: none;
    flex-direction: column;
    gap: 1px;
  }

  .apart {
    margin-left: 77px;
  }

  .tail {
    width: 31px;
    margin-left: 6px;
  }

  .canvas {
    position: relative;
    flex: 1;
    min-height: 0;
    margin-right: 1px;
    overflow: hidden;
    background: #000;
  }

  .scene {
    position: absolute;
    inset: 0;
    width: 100%;
    height: 100%;
    fill: none;
  }

  .axis {
    fill: #c8c8c8;
    font: 700 15px "Liberation Mono", monospace;
  }

  .panel {
    position: absolute;
    top: 3px;
    left: 10px;
    display: flex;
    flex-direction: column;
    width: 166px;
    height: 177px;
    background: #fff;
    border: 1px solid #fff;
  }

  .panel h2 {
    margin: 0;
    padding: 7px;
    color: #999;
    font-size: 12px;
    font-weight: 400;
  }

  .checks {
    flex: 1;
    padding: 2px 3px;
    border: 1px solid #828790;
    border-bottom-width: 2px;
  }

  .checks label {
    display: flex;
    align-items: center;
    gap: 4px;
    height: 12px;
  }

  input[type="checkbox"] {
    position: relative;
    width: 11px;
    height: 11px;
    border: 1px solid #707070;
    background: #fff;
    appearance: none;
  }

  input[type="checkbox"]:checked::after {
    content: "";
    position: absolute;
    top: 0;
    left: 2px;
    width: 6px;
    height: 3px;
    border: solid #222;
    border-width: 0 0 1px 1px;
    transform: translateY(2px) rotate(-45deg);
  }

  .row.snap {
    height: 30px;
    gap: 4px;
    margin-bottom: 3px;
  }

  .offset {
    gap: 3px;
    color: #787878;
  }

  .offset > .combo {
    margin: 0;
    color: #000;
  }

  .offset .sep,
  .offset .grip {
    margin-right: 0;
  }

  .offset .sep {
    margin-left: 0;
  }

  .spin {
    display: flex;
    align-items: center;
    width: 58px;
    height: 23px;
    padding-right: 4px;
    border: 1px solid #787878;
  }

  .spin input {
    flex: 1;
    width: 0;
    padding-right: 10px;
    text-align: right;
  }

  .turn + .spin {
    width: 68px;
  }

  .spin svg {
    width: 6px;
    height: 14px;
  }

  .turn {
    display: flex;
    align-items: center;
    gap: 8px;
    padding: 0 1px 0 0;
    color: #000;
  }

  .dock {
    display: flex;
    flex: none;
    padding-right: 1px;
  }

  .handle {
    flex: 0 0 12px;
    margin-right: 1px;
    background: radial-gradient(circle, #b8b8b8 1px, transparent 1px) 0 0 / 5px 5px;
  }

  .handle svg {
    width: 10px;
    height: 10px;
  }

  .dock-body {
    flex: 1;
    min-width: 0;
  }

  .bars {
    height: 27px;
  }

  .total {
    padding-left: 6px;
  }

  .grid {
    border: 1px solid #a0a0a0;
    border-left: 0;
    margin-bottom: 1px;
    background: #f0f0f0;
  }

  .grid-view {
    display: flex;
  }

  table {
    flex: 1;
    min-width: 0;
    width: 100%;
    table-layout: fixed;
    border-spacing: 0;
    background: #fff;
    line-height: 12px;
  }

  th,
  td {
    padding: 0 0 0 2px;
    border: solid #c0c0c0;
    border-width: 0 1px 1px 0;
    font-weight: 400;
    text-align: left;
    white-space: normal;
    word-break: break-all;
  }

  th {
    padding: 0;
    background: linear-gradient(#fff, #f0f0f0);
    text-align: center;
    white-space: nowrap;
  }

  thead th {
    height: 19px;
  }

  thead th:last-child {
    text-align: right;
  }

  tbody td {
    background: #ccffd8;
  }

  td.formula {
    padding-right: 3px;
    line-break: anywhere;
  }

  th:nth-child(2),
  td:nth-child(2) {
    border-right-color: #000;
  }

  th.hot {
    background: linear-gradient(#fbe0b0, #f3c06b);
    color: #600040;
  }

  .current th {
    background: #ffd48a;
    color: #600040;
  }

  .current .dia {
    background: #aeeadb;
  }

  td.grade svg {
    width: 10px;
    height: 10px;
    margin: 0 auto;
  }

  td.figure {
    padding: 0;
  }

  .figure text {
    font: 10px "Liberation Mono", monospace;
  }

  .empty th,
  .empty td {
    height: 17px;
    border-bottom: 0;
  }

  .empty td {
    background: #fff;
  }

  .c0 { width: 34px; }
  .c1 { width: 73px; }
  .c2 { width: 56px; }
  .c3 { width: 36px; }
  .c4 { width: 33px; }
  .c5 { width: 201px; }
  .c6 { width: 166px; }
  .c7 { width: 156px; }
  .c8, .c12, .c13 { width: 61px; }
  .c9 { width: 38px; }
  .c10 { width: 39px; }
  .c11 { width: 49px; }

  .status {
    display: flex;
    gap: 3px;
    position: relative;
    flex: none;
    height: 22px;
    padding: 1px 0;
  }

  .status > span {
    padding: 1px 2px;
    border: 1px solid #d0d0d0;
    background: linear-gradient(#fff, #f0f0f0);
  }

  .s1 { width: 148px; }
  .s2 { width: 77px; }
  .s3 { width: 97px; }
  .s4 { width: 48px; }
  .s5 { flex: 1; }

  .ime {
    display: flex;
    align-items: center;
    gap: 6px;
    position: absolute;
    right: 0;
    bottom: 0;
    height: 24px;
    padding-right: 4px;
    background: #fff;
    border: 1px solid #b8c8dc;
    border-width: 1px 0;
  }

  .ime svg {
    width: 16px;
    height: 16px;
  }

  .ime .s-logo {
    width: 30px;
    height: 28px;
  }

  .ime b {
    color: #1e74c8;
    font-size: 14px;
  }

  .taskbar {
    display: flex;
    flex: none;
    height: 40px;
    background: #020b0e;
    color: #fff;
  }

  .start {
    display: grid;
    place-items: center;
    width: 48px;
    background: #000;
  }

  .start svg,
  .notice svg {
    width: 16px;
    height: 16px;
  }

  .search {
    display: flex;
    align-items: center;
    gap: 6px;
    width: 344px;
    padding: 0 8px;
    background: #333;
  }

  .search input {
    flex: 1;
    min-width: 0;
    font-size: 14px;
  }

  .search input::placeholder {
    color: #9a9a9a;
  }

  .search svg {
    width: 22px;
    height: 22px;
  }

  .apps {
    display: flex;
    gap: 2px;
    flex: 1;
    padding-left: 2px;
  }

  .apps button {
    display: grid;
    place-items: center;
    width: 48px;
    border-bottom: 2px solid transparent;
  }

  .apps svg {
    width: 24px;
    height: 24px;
  }

  .apps .run {
    border-color: #76b9ed;
  }

  .apps .here {
    background: #333e42;
  }

  .cpu,
  .clock {
    display: flex;
    flex-direction: column;
    justify-content: center;
    align-items: center;
    line-height: 18px;
  }

  .cpu {
    margin-right: 18px;
  }

  .tray {
    display: flex;
    align-items: center;
    gap: 9px;
    margin-right: 22px;
  }

  .tray svg {
    width: 16px;
    height: 16px;
    fill: none;
    stroke: #fff;
  }

  .tray svg:last-child {
    stroke: none;
  }

  .tray b {
    font-size: 14px;
    font-weight: 400;
  }

  .notice {
    display: grid;
    place-items: center;
    width: 57px;
    margin: 0 4px;
    border-right: 1px solid #444;
  }
</style>
